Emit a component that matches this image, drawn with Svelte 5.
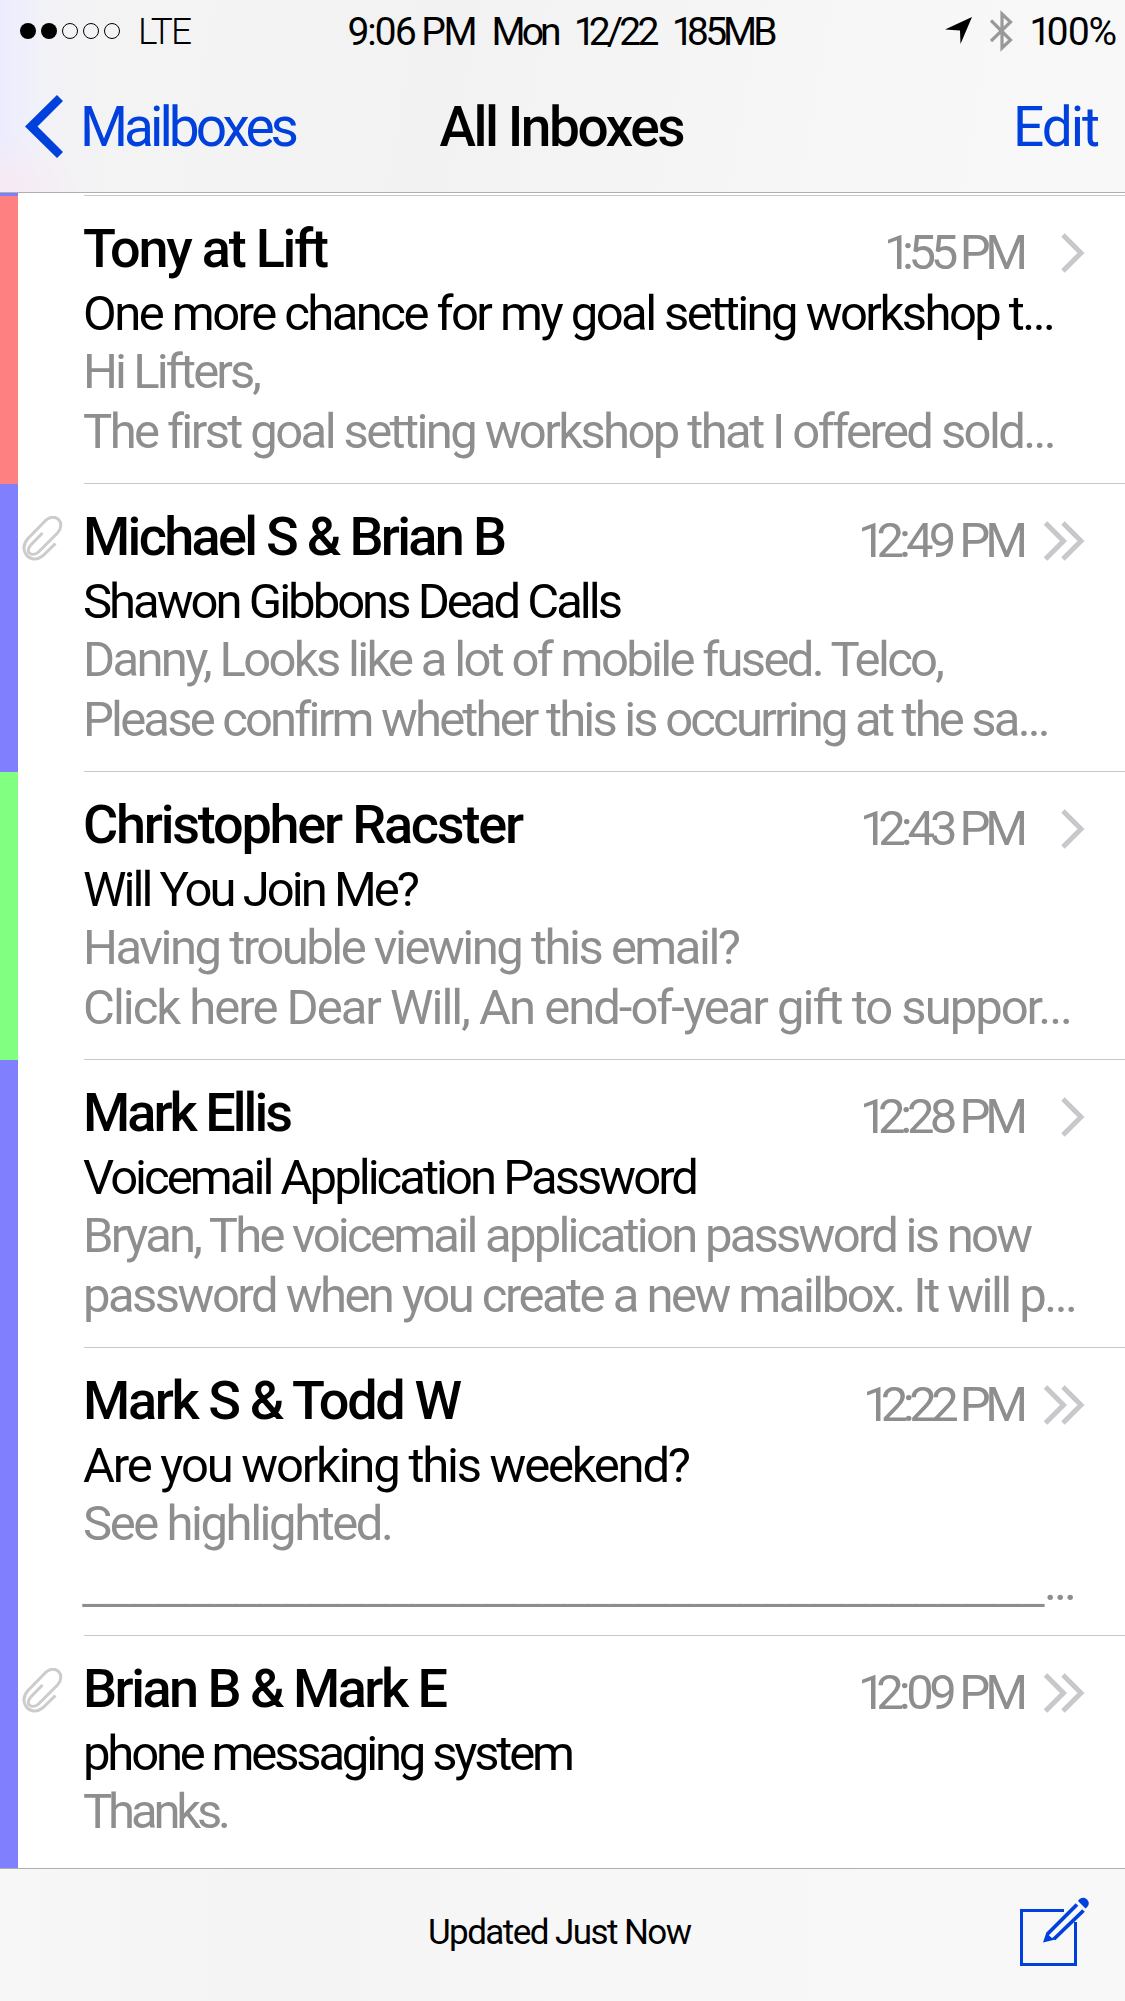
<script lang="ts">
	type Message = {
		account: 'red' | 'blue' | 'green';
		sender: [string, number];
		time: [string, number];
		subject: [string, number];
		preview: [string, number][];
		thread?: boolean;
		attachment?: boolean;
		rule?: boolean;
	};

	// Each text is paired with the width it is tracked to.
	const messages: Message[] = [
		{
			account: 'red',
			sender: ['Tony at Lift', 246],
			time: ['1:55 PM', 142],
			subject: ['One more chance for my goal setting workshop t...', 973],
			preview: [['Hi Lifters,', 179], ['The first goal setting workshop that I offered sold...', 972]]
		},
		{
			account: 'blue',
			sender: ['Michael S & Brian B', 424],
			time: ['12:49 PM', 168],
			subject: ['Shawon Gibbons Dead Calls', 540],
			preview: [['Danny, Looks like a lot of mobile fused. Telco,', 862], ['Please confirm whether this is occurring at the sa...', 966]],
			thread: true,
			attachment: true
		},
		{
			account: 'green',
			sender: ['Christopher Racster', 441],
			time: ['12:43 PM', 166],
			subject: ['Will You Join Me?', 337],
			preview: [['Having trouble viewing this email?', 658], ['Click here Dear Will, An end-of-year gift to suppor...', 990]]
		},
		{
			account: 'blue',
			sender: ['Mark Ellis', 210],
			time: ['12:28 PM', 166],
			subject: ['Voicemail Application Password', 616],
			preview: [['Bryan, The voicemail application password is now', 950], ['password when you create a new mailbox. It will p...', 995]]
		},
		{
			account: 'blue',
			sender: ['Mark S & Todd W', 379],
			time: ['12:22 PM', 163],
			subject: ['Are you working this weekend?', 608],
			preview: [['See highlighted.', 311]],
			thread: true,
			rule: true
		},
		{
			account: 'blue',
			sender: ['Brian B & Mark E', 365],
			time: ['12:09 PM', 168],
			subject: ['phone messaging system', 492],
			preview: [['Thanks.', 148]],
			thread: true,
			attachment: true
		}
	];

	// Adjusts letter-spacing until the text is as wide as asked. The margin
	// takes back the spacing that follows the last letter.
	function track(node: HTMLElement, width: number) {
		const natural = node.getBoundingClientRect().width;
		const count = (node.textContent ?? '').length;
		const spacing = (width - natural) / (count - 1);
		node.style.letterSpacing = `${spacing}px`;
		node.style.marginRight = `${-spacing}px`;
	}
</script>

<div class="phone">
	<header>
		<div class="status">
			<div class="carrier">
				<svg width="102" height="20" viewBox="0 0 102 20">
					{#each [0, 1, 2, 3, 4] as dot}
						<circle cx={9 + dot * 21} cy="10" r={dot < 2 ? 8 : 7.5} fill={dot < 2 ? '#000' : 'none'} stroke={dot < 2 ? 'none' : '#000'} />
					{/each}
				</svg>
				<span class="network" use:track={54}>LTE</span>
			</div>
			<div class="clock">
				<span use:track={130}>9:06 PM</span>
				<span use:track={70}>Mon</span>
				<span use:track={84}>12/22</span>
				<span use:track={104}>185MB</span>
			</div>
			<div class="power">
				<svg width="28" height="28" viewBox="0 0 28 28"><path d="M0 12.5L27 0L15.5 27L15 13.5Z" /></svg>
				<svg width="24" height="42" viewBox="0 0 24 42" fill="none" stroke="#999" stroke-width="3.2">
					<path d="M1 10.5L20.5 30L12 38V4L20.5 12L1 31" />
				</svg>
				<span use:track={86}>100%</span>
			</div>
		</div>
		<nav>
			<div class="back">
				<svg width="38" height="64" viewBox="0 0 38 64"><path d="M0 31.5L32 0L38 6L12.5 31.5L38 57L32 63Z" /></svg>
				<span use:track={219}>Mailboxes</span>
			</div>
			<h1><span use:track={246}>All Inboxes</span></h1>
			<div class="edit"><span use:track={87}>Edit</span></div>
		</nav>
	</header>

	<main>
		<div class="edge"></div>
		{#each messages as message}
			<article>
				<div class="account {message.account}"></div>
				<div class="gutter">
					{#if message.attachment}
						<svg width="42" height="46" viewBox="0 0 42 46" fill="none" stroke="#ccc" stroke-width="3">
							<path d="M20.5 17L8.8 29C1.8 36.5 10.8 41.5 16.5 36L35.5 17C44.5 7 33.5-4.5 23.5 4.5L6 22.5C-5 34.5 8.5 49.5 20.5 40L33.5 27.5" />
						</svg>
					{/if}
				</div>
				<div class="body">
					<div class="top">
						<h2><span use:track={message.sender[1]}>{message.sender[0]}</span></h2>
						<time><span use:track={message.time[1]}>{message.time[0]}</span></time>
						<svg class="chevron" width="42" height="40" viewBox="0 0 42 40" fill="none" stroke="#c7c7cc" stroke-width="5">
							<path d="M20 2L38 20L20 38" />
							{#if message.thread}
								<path d="M2.5 2L20.5 20L2.5 38" />
							{/if}
						</svg>
					</div>
					<p class="subject"><span use:track={message.subject[1]}>{message.subject[0]}</span></p>
					{#each message.preview as [text, width]}
						<p><span use:track={width}>{text}</span></p>
					{/each}
					{#if message.rule}
						<p><span class="rule" use:track={961}>{'_'.repeat(38)}</span><span use:track={33}>...</span></p>
					{/if}
				</div>
			</article>
		{/each}
	</main>

	<footer>
		<div class="updated"><span use:track={264}>Updated Just Now</span></div>
		<svg width="70" height="70" viewBox="0 0 70 70" fill="none" stroke="#0040dd" stroke-width="3">
			<path d="M44 14.5H1.5V68.5H55.5V26" />
			<path d="M57 8.5L28 37.5M63.5 14.5L34 43" stroke-width="3.8" />
			<path d="M23 46.5L26.5 36L29.5 37.5L29 39.5L32 42L33.5 41.5L35.5 43.5Z" fill="#0040dd" stroke="none" />
			<path d="M58 5C60.5 1 64.5 1 67 3.5C70 6.5 69 10 65.5 12.5Z" fill="#0040dd" stroke="none" />
		</svg>
	</footer>
</div>

<style>
	:global(body) {
		background: #fff;
	}

	.phone {
		display: flex;
		flex-direction: column;
		width: 1125px;
		height: 2001px;
		overflow: hidden;
		font-family: Roboto, 'Liberation Sans', sans-serif;
		font-variant-numeric: proportional-nums;
		color: #000;
		white-space: nowrap;
	}

	header {
		height: 192px;
		border-bottom: 1px solid #afafb0;
		background:
			radial-gradient(ellipse 90px 60px at 0 100%, #f8eaf2, transparent),
			linear-gradient(90deg, #ececff 0, rgba(240, 240, 250, 0.5) 45px, transparent 120px),
			linear-gradient(100deg, #f4f4f4 0, #f2f2f2 40%, #f7f7f7 75%, #f8f8f8 100%);
	}

	.status {
		display: grid;
		grid-template-columns: 1fr auto 1fr;
		height: 62px;
		font-size: 39px;
		line-height: 62px;
	}

	.carrier {
		display: flex;
		align-items: center;
		gap: 17px;
		padding-left: 19px;
	}

	.carrier svg {
		margin-bottom: 2px;
	}

	.network {
		font-size: 37px;
		font-weight: 300;
	}

	.clock {
		display: flex;
		gap: 14px;
		padding-top: 1px;
	}

	.power {
		display: flex;
		justify-content: flex-end;
		align-items: center;
		gap: 17px;
		padding: 1px 8px 0 0;
	}

	.power svg {
		margin-bottom: 2px;
	}

	nav {
		display: grid;
		grid-template-columns: 1fr auto 1fr;
		height: 130px;
		font-size: 55px;
		line-height: 130px;
	}

	.back,
	.edit {
		display: flex;
		align-items: center;
		color: #0040dd;
	}

	.back {
		gap: 17px;
		padding-left: 25px;
	}

	.back svg {
		fill: #0040dd;
	}

	.edit {
		justify-content: flex-end;
		padding-right: 25px;
	}

	h1,
	h2,
	p {
		margin: 0;
		font-size: inherit;
		font-weight: 500;
	}

	main {
		flex: 1;
		min-height: 0;
		overflow: hidden;
	}

	.edge {
		width: 18px;
		height: 3px;
		margin-bottom: -1px;
		background: #8080ff;
	}

	article {
		display: flex;
		height: 288px;
	}

	.account {
		width: 18px;
		margin-top: 1px;
		margin-bottom: -1px;
	}

	.red {
		background: #ff8080;
	}

	.blue {
		background: #8080ff;
	}

	.green {
		background: #80ff80;
	}

	.gutter {
		box-sizing: border-box;
		width: 66px;
		padding: 33px 0 0 4px;
	}

	.body {
		flex: 1;
		border-top: 1px solid #c8c7cc;
		padding-top: 23px;
	}

	.body h2,
	.body p {
		margin-left: -1px;
	}

	.top {
		display: flex;
		height: 60px;
		line-height: 60px;
	}

	h2 {
		flex: 1;
		font-size: 54px;
	}

	time {
		padding-top: 4px;
		font-size: 49px;
		color: #8e8e8e;
	}

	.chevron {
		margin: 14px 40px 0 15px;
	}

	p {
		font-size: 49px;
		font-weight: 400;
		line-height: 60px;
		color: #8e8e8e;
	}

	.subject {
		margin-top: 6px;
		line-height: 57px;
		color: #000;
	}

	.rule {
		font-family: 'Liberation Sans', sans-serif;
		line-height: 1;
		vertical-align: 3px;
	}

	footer {
		display: flex;
		align-items: center;
		height: 132px;
		border-top: 1px solid #afafb0;
		background: linear-gradient(90deg, #f7f7f7 0, #f4f4f4 25%, #f7f7f7 50%, #f8f8f8 100%);
	}

	.updated {
		flex: 1;
		padding: 0 0 6px 428px;
		font-size: 35px;
	}

	footer svg {
		margin: 0 35px 8px 0;
	}
</style>
